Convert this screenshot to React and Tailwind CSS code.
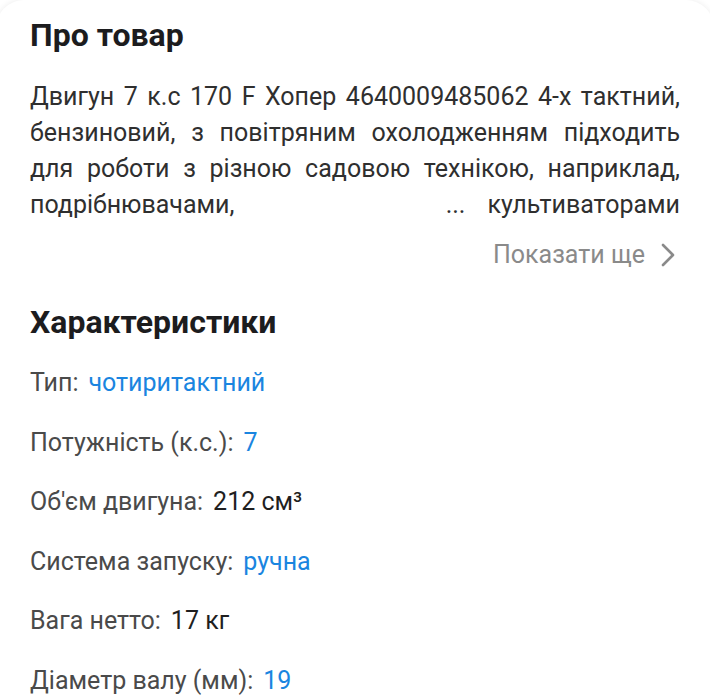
const specs = [
  { label: 'Тип:', value: 'чотиритактний', link: true },
  { label: 'Потужність (к.с.):', value: '7', link: true },
  { label: "Об'єм двигуна:", value: '212 см³', link: false },
  { label: 'Система запуску:', value: 'ручна', link: true },
  { label: 'Вага нетто:', value: '17 кг', link: false },
  { label: 'Діаметр валу (мм):', value: '19', link: true },
]

export default function App() {
  return (
    <div className="h-[700px] bg-white font-['Roboto','Noto_Sans',sans-serif] overflow-hidden">
      <div className="mx-[-4px] rounded-t-[28px] bg-white shadow-[0_0_6px_rgba(0,0,0,0.08)] px-[34px] pt-[14px] pb-10">
        <h2 className="text-[32px] leading-[42px] font-bold text-[#1c1c1e]">Про товар</h2>

        <div className="mt-[23px] text-[25px] leading-[36px] text-[#2f2f2f]">
          <p className="text-justify [text-align-last:justify]">
            Двигун 7 к.с 170 F Хопер 4640009485062 4-х тактний, бензиновий, з повітряним охолодженням підходить для роботи з різною садовою технікою, наприклад,
          </p>
          <div className="flex items-baseline">
            <span>подрібнювачами,</span>
            <span className="flex-1" />
            <span>...</span>
            <span className="ml-[22px]">культиваторами</span>
          </div>
        </div>

        <div className="mt-[14px] flex items-center justify-end gap-[16px] pr-[5px] text-[25px] leading-[36px] text-[#8a8a8a]">
          <span>Показати ще</span>
          <svg width="14" height="24" viewBox="0 0 14 24" fill="none" stroke="#8a8a8a" strokeWidth="2.6" strokeLinecap="round" strokeLinejoin="round">
            <path d="M2 2l10 10-10 10" />
          </svg>
        </div>

        <h2 className="mt-[28px] text-[32px] leading-[42px] font-bold text-[#1c1c1e]">Характеристики</h2>

        <div className="mt-[22px] flex flex-col gap-[23.5px]">
          {specs.map(s => (
            <div key={s.label} className="flex items-baseline gap-[10px] text-[25px] leading-[36px]">
              <span className="text-[#4a4a4a]">{s.label}</span>
              <span className={s.link ? 'text-[#1a85e0]' : 'text-[#1f1f1f]'}>{s.value}</span>
            </div>
          ))}
        </div>
      </div>
    </div>
  )
}
